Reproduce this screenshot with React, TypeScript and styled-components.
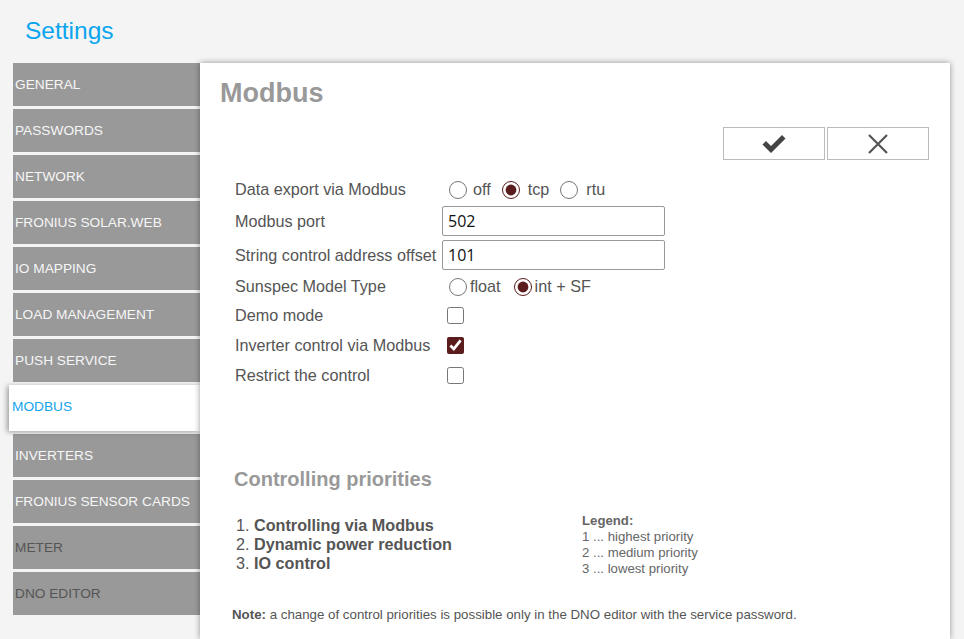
import React from 'react';
import styled, { createGlobalStyle } from 'styled-components';

const GlobalStyle = createGlobalStyle`
  html, body {
    margin: 0;
    padding: 0;
    background: #f4f4f4;
    font-family: "Liberation Sans", Arial, sans-serif;
    overflow: hidden;
  }
`;

// STYLES
const Page = styled.div`
  height: 639px;
  display: flex;
  flex-direction: column;
`;

const Header = styled.h1`
  margin: 0;
  height: 63px;
  padding-left: 25px;
  box-sizing: border-box;
  display: flex;
  align-items: center;
  padding-bottom: 2px;
  font-size: 24.5px;
  font-weight: normal;
  color: #0aa5ef;
`;

const Body = styled.div`
  display: flex;
  flex: 1;
  min-height: 0;
`;

const Sidebar = styled.nav`
  width: 187px;
  margin-left: 13px;
  display: flex;
  flex-direction: column;
`;

const NavItem = styled.div<{ $active?: boolean; $disabled?: boolean }>`
  height: ${(p) => (p.$active ? 46 : 43)}px;
  box-sizing: border-box;
  margin-bottom: 3px;
  margin-left: ${(p) => (p.$active ? -4 : 0)}px;
  padding-left: ${(p) => (p.$active ? 3 : 2)}px;
  padding-bottom: ${(p) => (p.$active ? 4 : 0)}px;
  display: flex;
  align-items: center;
  font-size: 13.7px;
  text-transform: uppercase;
  background: ${(p) => (p.$active ? '#fff' : '#999')};
  color: ${(p) => (p.$active ? '#15a4ea' : p.$disabled ? '#555' : '#f6f6f6')};
  box-shadow: ${(p) => (p.$active ? '-2px 1px 5px rgba(0,0,0,0.35)' : 'none')};
  position: relative;
  z-index: ${(p) => (p.$active ? 1 : 0)};
  white-space: nowrap;
`;

const Panel = styled.main`
  width: 750px;
  background: #fff;
  box-shadow: 0 0 6px rgba(0, 0, 0, 0.4);
  position: relative;
  z-index: 2;
  padding: 14px 21px 0 20px;
  box-sizing: border-box;
`;

const Title = styled.h2`
  margin: 0;
  font-size: 27px;
  font-weight: bold;
  color: #999;
  line-height: 32px;
`;

const ButtonBar = styled.div`
  display: flex;
  justify-content: flex-end;
  gap: 2px;
  margin-top: 18px;
`;

const ActionButton = styled.button`
  width: 102px;
  height: 33px;
  border: 1px solid #bbb;
  background: #fff;
  display: flex;
  align-items: center;
  justify-content: center;
  padding: 0;
`;

const Form = styled.div`
  margin-top: 15px;
  padding-left: 15px;
  display: flex;
  flex-direction: column;
`;

const Row = styled.div<{ $h: number }>`
  height: ${(p) => p.$h}px;
  display: grid;
  grid-template-columns: 207px 1fr;
  align-items: center;
`;

const Label = styled.span`
  font-size: 16.2px;
  color: #555;
  white-space: nowrap;
`;

const Options = styled.div`
  display: flex;
  align-items: center;
`;

const RadioLabel = styled.label<{ $gap: number }>`
  display: flex;
  align-items: center;
  font-size: 16.2px;
  color: #555;
  margin-right: ${(p) => p.$gap}px;
`;

const Radio = styled.input.attrs({ type: 'radio' })<{ $space: number }>`
  width: 18px;
  height: 18px;
  margin: 2px ${(p) => p.$space}px 0 0;
  accent-color: #5a1c1c;
`;

const Check = styled.input.attrs({ type: 'checkbox' })`
  width: 17px;
  height: 17px;
  margin: 0 0 0 5px;
  accent-color: #5a1c1c;
`;

const TextInput = styled.input`
  width: 223px;
  height: 30px;
  box-sizing: border-box;
  border: 1px solid #999;
  border-radius: 2px;
  padding: 0 5px;
  font-family: "Open Sans", sans-serif;
  font-size: 16px;
  color: #111;
`;

const SectionTitle = styled.h3`
  margin: 78px 0 0 14px;
  font-size: 20px;
  font-weight: bold;
  color: #999;
  line-height: 24px;
`;

const Priorities = styled.div`
  display: grid;
  grid-template-columns: 346px 1fr;
  margin-top: 22px;
  padding-left: 16px;
`;

const PriorityList = styled.ol`
  margin: 3px 0 0;
  padding: 0;
  list-style: none;
  font-size: 16.2px;
  line-height: 19px;
  color: #555;
`;

const Legend = styled.div`
  font-size: 13.2px;
  line-height: 16px;
  color: #666;
`;

const Note = styled.p`
  margin: 30px 0 0 12px;
  font-size: 13.3px;
  color: #555;
`;

// DATA
const navItems = [
  { label: 'General' },
  { label: 'Passwords' },
  { label: 'Network' },
  { label: 'Fronius Solar.web' },
  { label: 'IO Mapping' },
  { label: 'Load Management' },
  { label: 'Push Service' },
  { label: 'Modbus', active: true },
  { label: 'Inverters' },
  { label: 'Fronius Sensor Cards' },
  { label: 'Meter', disabled: true },
  { label: 'DNO Editor', disabled: true },
];

const priorities = ['Controlling via Modbus', 'Dynamic power reduction', 'IO control'];

const CheckIcon = () => (
  <svg width="26" height="20" viewBox="0 0 26 20">
    <path d="M1.5 10.5 L5 7 L10 12 L21 1 L24.5 4.5 L10 19 Z" fill="#444" />
  </svg>
);

const CloseIcon = () => (
  <svg width="22" height="22" viewBox="0 0 22 22">
    <path d="M2 2 L20 20 M20 2 L2 20" stroke="#555" strokeWidth="2.2" />
  </svg>
);

// COMPONENT
const App: React.FC = () => {
  return (
    <Page>
      <GlobalStyle />
      <Header>Settings</Header>
      <Body>
        <Sidebar>
          {navItems.map((item) => (
            <NavItem key={item.label} $active={item.active} $disabled={item.disabled}>
              {item.label}
            </NavItem>
          ))}
        </Sidebar>

        <Panel>
          <Title>Modbus</Title>

          <ButtonBar>
            <ActionButton aria-label="Save">
              <CheckIcon />
            </ActionButton>
            <ActionButton aria-label="Cancel">
              <CloseIcon />
            </ActionButton>
          </ButtonBar>

          <Form>
            <Row $h={28}>
              <Label>Data export via Modbus</Label>
              <Options>
                <RadioLabel $gap={11} style={{ marginLeft: 7 }}>
                  <Radio name="export" $space={6} /> off
                </RadioLabel>
                <RadioLabel $gap={11}>
                  <Radio name="export" $space={8} defaultChecked /> tcp
                </RadioLabel>
                <RadioLabel $gap={0}>
                  <Radio name="export" $space={8} /> rtu
                </RadioLabel>
              </Options>
            </Row>
            <Row $h={36}>
              <Label>Modbus port</Label>
              <TextInput defaultValue="502" />
            </Row>
            <Row $h={32}>
              <Label>String control address offset</Label>
              <TextInput defaultValue="101" />
            </Row>
            <Row $h={30}>
              <Label>Sunspec Model Type</Label>
              <Options>
                <RadioLabel $gap={13} style={{ marginLeft: 7 }}>
                  <Radio name="sunspec" $space={3} /> float
                </RadioLabel>
                <RadioLabel $gap={0}>
                  <Radio name="sunspec" $space={3} defaultChecked /> int + SF
                </RadioLabel>
              </Options>
            </Row>
            <Row $h={28}>
              <Label>Demo mode</Label>
              <Options>
                <Check />
              </Options>
            </Row>
            <Row $h={32}>
              <Label>Inverter control via Modbus</Label>
              <Options>
                <Check defaultChecked />
              </Options>
            </Row>
            <Row $h={28}>
              <Label>Restrict the control</Label>
              <Options>
                <Check />
              </Options>
            </Row>
          </Form>

          <SectionTitle>Controlling priorities</SectionTitle>

          <Priorities>
            <PriorityList>
              {priorities.map((p, i) => (
                <li key={p}>
                  {i + 1}. <b>{p}</b>
                </li>
              ))}
            </PriorityList>
            <Legend>
              <b>Legend:</b>
              <br />1 ... highest priority
              <br />2 ... medium priority
              <br />3 ... lowest priority
            </Legend>
          </Priorities>

          <Note>
            <b>Note:</b> a change of control priorities is possible only in the DNO editor with the
            service password.
          </Note>
        </Panel>
      </Body>
    </Page>
  );
};

export default App;
